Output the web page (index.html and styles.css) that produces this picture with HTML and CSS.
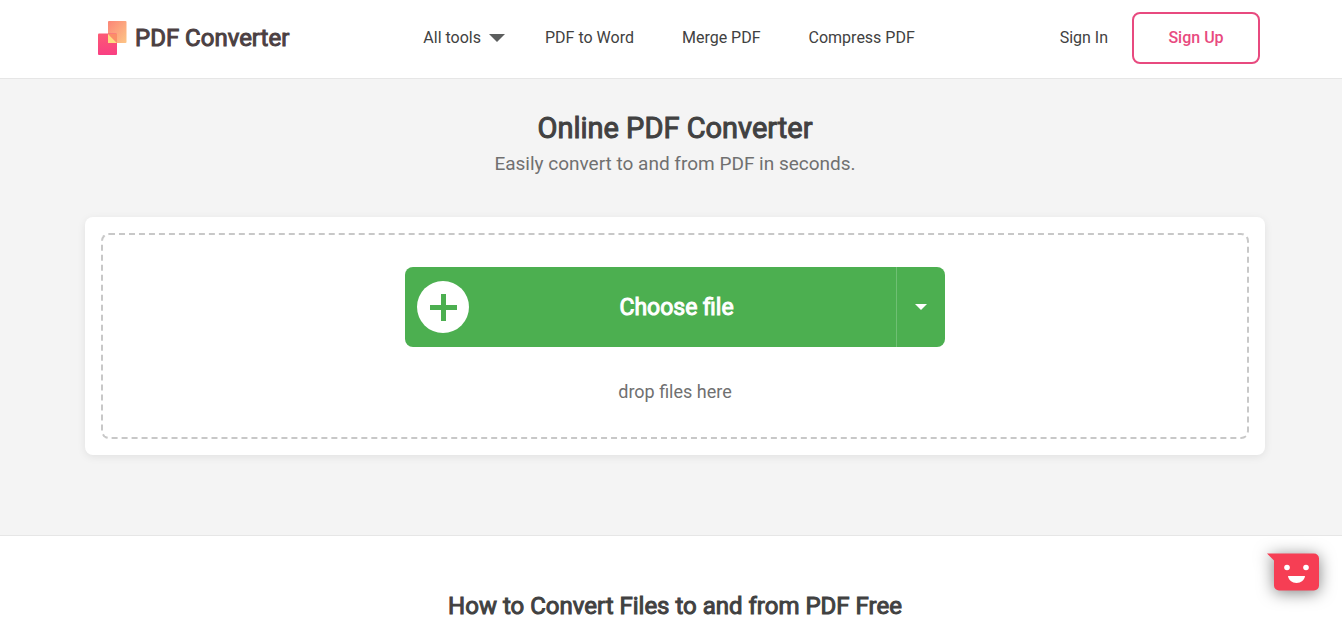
FILE: index.html
```html
<!DOCTYPE html>
<html lang="en">
<head>
    <meta charset="UTF-8">
    <meta name="viewport" content="width=device-width, initial-scale=1.0">
    <title>Online PDF Converter</title>
    <link rel="stylesheet" href="styles.css">
</head>
<body>
    <header class="site-header">
        <div class="container header-inner">
            <a href="#" class="logo">
                <svg width="29" height="34" viewBox="0 0 29 34" aria-hidden="true">
                    <defs>
                        <linearGradient id="logo-top" x1="0" y1="0" x2="1" y2="1">
                            <stop offset="0" stop-color="#fb8577"/>
                            <stop offset="1" stop-color="#fdc686"/>
                        </linearGradient>
                        <linearGradient id="logo-bottom" x1="0" y1="0" x2="0" y2="1">
                            <stop offset="0" stop-color="#fc5a74"/>
                            <stop offset="1" stop-color="#f93f83"/>
                        </linearGradient>
                    </defs>
                    <rect x="10" width="18.500" height="22" rx="1" fill="url(#logo-top)"/>
                    <rect y="12.500" width="19" height="21.500" rx="1" fill="url(#logo-bottom)"/>
                    <path d="M10 13h9v9z" fill="#fb8e68"/>
                    <path d="M10 13v9h9z" fill="#fedc80"/>
                </svg>
                <span>PDF Converter</span>
            </a>
            <nav class="main-nav">
                <a href="#" class="nav-tools">All tools
                    <svg width="16" height="8" viewBox="0 0 16 8" aria-hidden="true"><path d="M0 0h16L8 8z" fill="#5c5e5e"/></svg>
                </a>
                <a href="#">PDF to Word</a>
                <a href="#">Merge PDF</a>
                <a href="#">Compress PDF</a>
            </nav>
            <div class="auth">
                <a href="#">Sign In</a>
                <a href="#" class="sign-up">Sign Up</a>
            </div>
        </div>
    </header>

    <main>
        <section class="hero">
            <div class="container">
                <h1>Online PDF Converter</h1>
                <p class="subtitle">Easily convert to and from PDF in seconds.</p>
                <div class="card">
                    <div class="dropzone">
                        <div class="upload">
                            <button type="button" class="choose-file">
                                <svg width="52" height="52" viewBox="0 0 52 52" aria-hidden="true">
                                    <circle cx="26" cy="26" r="26" fill="#fff"/>
                                    <path d="M24 13h5v11h11v5H29v11h-5V29H13v-5h11z" fill="#4caf50"/>
                                </svg>
                                <span>Choose file</span>
                            </button>
                            <button type="button" class="choose-source" aria-label="More sources">
                                <svg width="12" height="6" viewBox="0 0 12 6" aria-hidden="true"><path d="M0 0h12L6 6z" fill="#fff"/></svg>
                            </button>
                        </div>
                        <p class="drop-text">drop files here</p>
                    </div>
                </div>
            </div>
        </section>

        <section class="how-to">
            <div class="container">
                <h2>How to Convert Files to and from PDF Free</h2>
            </div>
        </section>
    </main>

    <button type="button" class="chat-btn" aria-label="Open chat">
        <svg width="52" height="38" viewBox="0 0 52 38" aria-hidden="true">
            <path d="M0 .5h47a5 5 0 0 1 5 5v27a5 5 0 0 1-5 5H12a5 5 0 0 1-5-5v-25z" fill="#f63e54"/>
            <circle cx="20" cy="14.500" r="2.800" fill="#fff"/>
            <circle cx="39" cy="14.500" r="2.800" fill="#fff"/>
            <path d="M21 23h17c-.5 4-4 7-8.500 7s-8-3-8.500-7z" fill="#fff"/>
        </svg>
    </button>
</body>
</html>
```

FILE: styles.css
```css
:root {
    --pink: #e84a7f;
    --green: #4caf50;
    --dark: #414141;
    --gray: #707070;
    --light: #f4f4f4;
    --line: #e6e6e6;
}

* {
    box-sizing: border-box;
}

body {
    margin: 0;
    font-family: Roboto, "Liberation Sans", sans-serif;
    font-size: 16px;
    line-height: 24px;
    color: var(--dark);
    background-color: #fff;
    overflow-x: hidden;
}

h1,
h2,
p {
    margin: 0;
}

h1,
h2,
.logo,
.choose-file {
    font-weight: 400;
    -webkit-text-stroke: 1px currentColor;
}

a {
    color: inherit;
    text-decoration: none;
}

svg {
    display: block;
    flex: none;
}

button {
    border: none;
    padding: 0;
    font-family: inherit;
    cursor: pointer;
}

.site-header,
.hero,
.how-to {
    padding-left: 8px;
    border-bottom: 1px solid var(--line);
}

.container {
    max-width: 1180px;
    margin: 0 auto;
}

/* Header */
.header-inner {
    display: flex;
    align-items: center;
    padding: 12px 5px 14px 13px;
}

.logo {
    display: flex;
    align-items: center;
    gap: 8px;
    font-size: 24px;
    color: #4b4042;
    white-space: nowrap;
}

.main-nav {
    display: flex;
    gap: 48px;
    margin-left: 134px;
    white-space: nowrap;
}

.nav-tools {
    display: flex;
    align-items: center;
    gap: 8px;
    margin-right: -8px;
}

.auth {
    display: flex;
    align-items: center;
    gap: 24px;
    margin-left: auto;
    white-space: nowrap;
}

.sign-up {
    width: 128px;
    padding: 12px 0;
    border: 2px solid var(--pink);
    border-radius: 8px;
    color: var(--pink);
    font-weight: 500;
    text-align: center;
}

/* Converter */
.hero {
    padding-top: 31px;
    padding-bottom: 80px;
    background-color: var(--light);
    text-align: center;
}

.hero h1 {
    font-size: 29px;
    line-height: 36px;
}

.subtitle {
    margin-top: 6px;
    font-size: 19px;
    color: var(--gray);
}

.card {
    margin-top: 41px;
    padding: 16px;
    background-color: #fff;
    border-radius: 8px;
    box-shadow: 0 2px 8px rgba(0, 0, 0, 0.08);
}

.dropzone {
    padding: 32px 32px 33px;
    border: 2px dashed #c8c8c8;
    border-radius: 8px;
}

.upload {
    display: flex;
    max-width: 540px;
    height: 80px;
    margin: 0 auto;
    border-radius: 8px;
    overflow: hidden;
}

.choose-file {
    flex: 1;
    display: flex;
    align-items: center;
    padding: 0 12px;
    background-color: var(--green);
    color: #fff;
    font-size: 23px;
}

.choose-file span {
    flex: 1;
}

.choose-source {
    display: flex;
    align-items: center;
    justify-content: center;
    width: 49px;
    border-left: 1px solid #6fbf73;
    background-color: var(--green);
}

.drop-text {
    margin-top: 33px;
    font-size: 18px;
    color: var(--gray);
}

/* How to */
.how-to {
    padding-top: 54px;
    padding-bottom: 54px;
    text-align: center;
}

.how-to h2 {
    font-size: 24px;
    line-height: 32px;
}

/* Chat launcher */
.chat-btn {
    position: fixed;
    right: 23px;
    bottom: 28px;
    background: none;
    filter: drop-shadow(0 2px 8px rgba(0, 0, 0, 0.5));
}
```
